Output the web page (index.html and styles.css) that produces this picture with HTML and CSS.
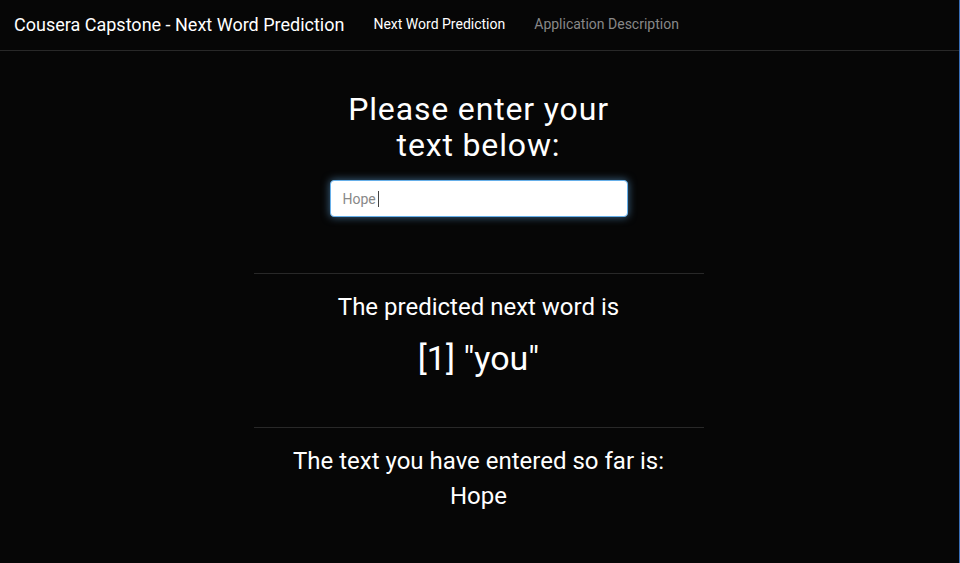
FILE: index.html
```html
<!DOCTYPE html>
<html>
<head>
<meta charset="utf-8">
<link rel="stylesheet" href="styles.css">
</head>
<body>
<nav class="navbar">
  <span class="brand">Cousera Capstone - Next Word Prediction</span>
  <ul class="nav-links">
    <li class="active">Next Word Prediction</li>
    <li>Application Description</li>
  </ul>
</nav>
<main class="content">
  <div class="entry">
    <h2 class="prompt">Please enter your text below:</h2>
    <div class="input-box"><span class="input-text">Hope</span><span class="caret"></span></div>
  </div>
  <section class="results">
    <hr class="rule">
    <h3 class="label">The predicted next word is</h3>
    <div class="prediction">[1] "you"</div>
    <hr class="rule">
    <h3 class="label">The text you have entered so far is:</h3>
    <div class="entered">Hope</div>
  </section>
</main>
</body>
</html>
```
FILE: styles.css
```css
html, body {
  margin: 0;
  padding: 0;
  background: #060606;
  color: #fff;
  font-family: Roboto, "Noto Sans", sans-serif;
  height: 100%;
}
body {
  border-right: 1px solid #3a6fb8;
  box-sizing: border-box;
}
.navbar {
  height: 51px;
  border-bottom: 1px solid #282828;
  display: flex;
  align-items: center;
  padding-left: 14px;
  padding-bottom: 2px;
  box-sizing: border-box;
}
.brand {
  font-size: 18px;
  color: #fff;
}
.nav-links {
  list-style: none;
  display: flex;
  margin: 0 0 0 29px;
  padding: 0;
  font-size: 14px;
  color: #888;
}
.nav-links li {
  margin-right: 29px;
}
.nav-links .active {
  color: #fff;
}
.content {
  display: flex;
  flex-direction: column;
  align-items: center;
  padding-right: 2px;
}
.entry {
  width: 300px;
  display: flex;
  flex-direction: column;
  align-items: center;
}
.prompt {
  font-weight: 400;
  font-size: 32px;
  letter-spacing: 0.85px;
  line-height: 36px;
  margin: 40px 0 17px;
  text-align: center;
}
.input-box {
  width: 298px;
  height: 37px;
  box-sizing: border-box;
  background: #fff;
  border: 1px solid #66afe9;
  border-radius: 4px;
  box-shadow: 0 0 8px rgba(102, 175, 233, 0.6);
  display: flex;
  align-items: center;
  padding-left: 12px;
  font-size: 14px;
  color: #888;
}
.caret {
  display: inline-block;
  width: 1px;
  height: 16px;
  background: #444;
  margin-left: 2px;
}
.results {
  width: 450px;
  text-align: center;
  margin-top: 56px;
}
.rule {
  border: 0;
  border-top: 1px solid #282828;
  margin: 0;
}
.label {
  font-weight: 400;
  font-size: 24px;
  line-height: 30px;
  margin: 18px 0 0;
}
.prediction {
  font-size: 34px;
  line-height: 40px;
  margin: 16px 0 49px;
}
.entered {
  font-size: 24px;
  line-height: 30px;
  margin-top: 5px;
}
```
